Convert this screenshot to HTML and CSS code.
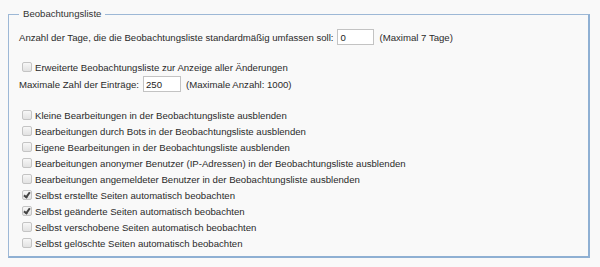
FILE: index.html
```html
<!DOCTYPE html>
<html lang="de">
<head>
  <meta charset="UTF-8" />
  <title>Einstellungen – Beobachtungsliste</title>
  <link rel="stylesheet" href="styles.css">
</head>
<body>
  <fieldset class="prefs">
    <legend>Beobachtungsliste</legend>

    <div class="row">
      <label for="days">Anzahl der Tage, die die Beobachtungsliste standardmäßig umfassen soll:</label>
      <input type="text" id="days" class="num" value="0">
      <span class="hint">(Maximal 7 Tage)</span>
    </div>

    <div class="group">
      <label class="check"><input type="checkbox"> Erweiterte Beobachtungsliste zur Anzeige aller Änderungen</label>
      <div class="row">
        <label for="limit">Maximale Zahl der Einträge:</label>
        <input type="text" id="limit" class="num" value="250">
        <span class="hint">(Maximale Anzahl: 1000)</span>
      </div>
    </div>

    <div class="group">
      <label class="check"><input type="checkbox"> Kleine Bearbeitungen in der Beobachtungsliste ausblenden</label>
      <label class="check"><input type="checkbox"> Bearbeitungen durch Bots in der Beobachtungsliste ausblenden</label>
      <label class="check"><input type="checkbox"> Eigene Bearbeitungen in der Beobachtungsliste ausblenden</label>
      <label class="check"><input type="checkbox"> Bearbeitungen anonymer Benutzer (IP-Adressen) in der Beobachtungsliste ausblenden</label>
      <label class="check"><input type="checkbox"> Bearbeitungen angemeldeter Benutzer in der Beobachtungsliste ausblenden</label>
      <label class="check"><input type="checkbox" checked> Selbst erstellte Seiten automatisch beobachten</label>
      <label class="check"><input type="checkbox" checked> Selbst geänderte Seiten automatisch beobachten</label>
      <label class="check"><input type="checkbox"> Selbst verschobene Seiten automatisch beobachten</label>
      <label class="check"><input type="checkbox"> Selbst gelöschte Seiten automatisch beobachten</label>
    </div>
  </fieldset>
</body>
</html>
```

FILE: styles.css
```css
body {
  margin: 0;
  padding-top: 6px;
  background: #f9f9f9;
  color: #2a2a2a;
  font-family: "Liberation Sans", Arial, sans-serif;
  font-size: 9.6px;
}

.prefs {
  margin: 0 10px 0 8px;
  padding: 6px 10px 5px 10px;
  border: 1px solid #9db8d6;
  border-width: 1px 2px 2px 1px;
  border-right-color: #8fb0d3;
  border-bottom-color: #8fb0d3;
}

.prefs legend {
  padding: 0 4px;
  line-height: 16px;
  color: #333;
}

.row {
  display: flex;
  align-items: center;
  height: 18px;
}

.group {
  margin-top: 13px;
}

.group + .group {
  margin-top: 14px;
}

.num {
  width: 37px;
  height: 16px;
  margin: 0 5px 0 4px;
  box-sizing: border-box;
  border: 1px solid #c3c3c3;
  background: #fff;
  font: inherit;
  padding: 0 2px;
  color: #222;
}

#limit {
  width: 38px;
}

.check {
  display: flex;
  align-items: center;
  height: 16px;
  padding-left: 3px;
}

.check input {
  appearance: none;
  width: 10px;
  height: 10px;
  margin: 0 3px 0 0;
  border: 1px solid #c4c4c4;
  border-radius: 2px;
  background: linear-gradient(#f7f7f7, #e2e2e2);
  position: relative;
}

.check input:checked::after {
  content: "";
  position: absolute;
  left: 2px;
  top: 0;
  width: 2px;
  height: 5px;
  border: solid #444;
  border-width: 0 2px 2px 0;
  transform: rotate(35deg);
}
```
